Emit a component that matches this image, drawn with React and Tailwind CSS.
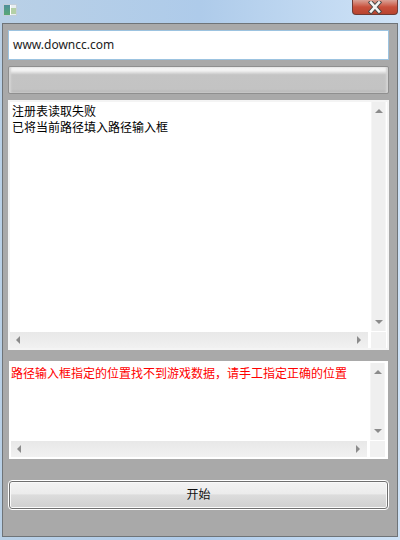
import React from 'react';

function Arrow({ dir }) {
  const points = {
    up: '0,5 4,1 8,5',
    down: '0,1 8,1 4,5',
    left: '5,0 5,8 1,4',
    right: '1,0 1,8 5,4',
  };
  const vertical = dir === 'up' || dir === 'down';
  return (
    <svg width={vertical ? 8 : 6} height={vertical ? 6 : 8} viewBox={vertical ? '0 0 8 6' : '0 0 6 8'}>
      <polygon points={points[dir]} fill="#8b8b8b" />
    </svg>
  );
}

function ScrollBox({ lines, boxClass, textClass }) {
  return (
    <div className={`flex flex-col bg-white border-2 ${boxClass}`}>
      <div className="flex flex-1 min-h-0">
        <div className={`flex-1 text-[12px] leading-[16px] ${textClass}`}>
          {lines.map((line) => (
            <div key={line}>{line}</div>
          ))}
        </div>
        <div className="w-[15px] mr-px bg-[#efefef] border-x border-[#f5f5f5] flex flex-col items-center justify-between pt-[6px] pb-[6px]">
          <Arrow dir="up" />
          <Arrow dir="down" />
        </div>
      </div>
      <div className="h-[16px] flex mt-px">
        <div className="flex-1 bg-gradient-to-b from-[#e8e8e8] to-[#f1f1f1] flex items-center justify-between pl-[5px] pr-[6px]">
          <Arrow dir="left" />
          <Arrow dir="right" />
        </div>
        <div className="w-[15px] mr-px bg-[#f1f1f1] ml-[3px]" />
      </div>
    </div>
  );
}

export default function App() {
  return (
    <div className="w-[400px] h-[540px] overflow-hidden flex flex-col bg-gradient-to-r from-[#b9d0e6] via-[#aecbea] to-[#cfe3f7] font-['Liberation_Sans','Noto_Sans_CJK_SC',sans-serif]">
      <div className="h-[23px] shrink-0 flex items-start justify-between pl-[3px] pr-[2px]">
        <div className="mt-1 w-[14px] h-3 flex border border-[#c3ced8] bg-[#e8eef2]">
          <div className="w-[6px] h-full bg-gradient-to-b from-[#4f8f9a] to-[#5aa872]" />
          <div className="w-px h-full bg-white" />
          <div className="flex-1 mt-[3px] h-[6px] bg-[#b4d0a6]" />
        </div>
        <div className="w-[46px] h-[15px] rounded-b-[4px] border border-t-0 border-[#6e3a34] bg-gradient-to-b from-[#d9a196] via-[#c8503c] to-[#b8442f] flex items-center justify-center">
          <svg width="14" height="13" viewBox="0 0 14 13">
            <path d="M3 1.5 L11 10.5 M11 1.5 L3 10.5" stroke="#4a4a4a" strokeWidth="4.4" strokeLinecap="square" />
            <path d="M3 1.5 L11 10.5 M11 1.5 L3 10.5" stroke="#f4f4f4" strokeWidth="2.6" strokeLinecap="square" />
          </svg>
        </div>
      </div>

      <div className="flex-1 ml-[2px] mr-[2px] mb-[3px] border border-[#6f7478] bg-[#a9a9a9] pt-[6px] pl-[5px] pr-[8px] flex flex-col">
        <div className="h-[30px] bg-white border border-[#9cc3e0] flex items-center pl-1 font-['Noto_Sans'] text-[12px] text-[#222]">
          www.downcc.com
        </div>

        <div className="mt-[6px] h-[28px] rounded-[2px] border border-[#8f8f8f] bg-[linear-gradient(to_bottom,#fafafa_0%,#f0f0f0_15%,#c4c4c4_30%,#c3c3c3_85%,#b6b6b6_100%)] shadow-[inset_2px_0_2px_#d4d4d4,inset_-2px_0_2px_#d4d4d4]" />

        <div className="mt-[6px]">
          <ScrollBox
            lines={['注册表读取失败', '已将当前路径填入路径输入框']}
            boxClass="h-[250px] border-[#f4f4f4]"
            textClass="pl-[2px] pt-[2px] text-black"
          />
        </div>

        <div className="mt-[11px] mx-px">
          <ScrollBox
            lines={['路径输入框指定的位置找不到游戏数据，请手工指定正确的位置']}
            boxClass="h-[98px] border-white"
            textClass="pt-[3px] text-[#ff0000]"
          />
        </div>

        <div className="mt-[22px] h-[28px] rounded-[3px] border border-[#6f6f6f] mx-px outline outline-1 outline-white shadow-[inset_0_0_0_1px_#fafafa] bg-[linear-gradient(to_bottom,#f3f3f3_0%,#ececec_45%,#dcdcdc_50%,#cfcfcf_100%)] flex items-center justify-center text-[12px] text-[#111]">
          开始
        </div>
      </div>
    </div>
  );
}
